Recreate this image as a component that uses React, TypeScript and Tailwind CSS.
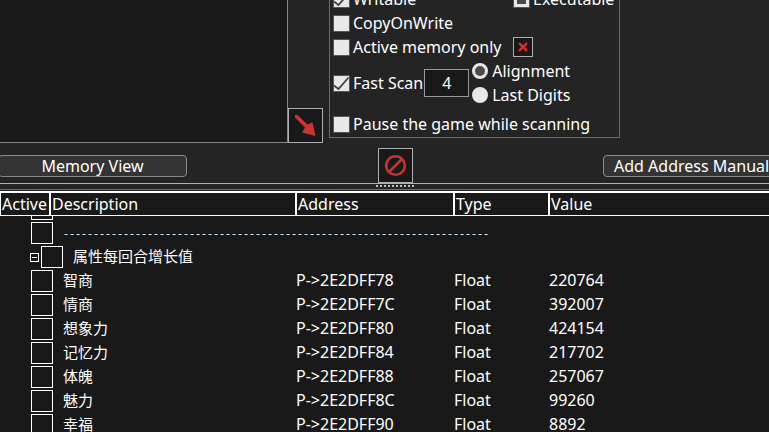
import React from 'react';

const ENTRIES = [
  { name: '智商', address: 'P->2E2DFF78', type: 'Float', value: '220764' },
  { name: '情商', address: 'P->2E2DFF7C', type: 'Float', value: '392007' },
  { name: '想象力', address: 'P->2E2DFF80', type: 'Float', value: '424154' },
  { name: '记忆力', address: 'P->2E2DFF84', type: 'Float', value: '217702' },
  { name: '体魄', address: 'P->2E2DFF88', type: 'Float', value: '257067' },
  { name: '魅力', address: 'P->2E2DFF8C', type: 'Float', value: '99260' },
  { name: '幸福', address: 'P->2E2DFF90', type: 'Float', value: '8892' },
];

interface OptionProps {
  label: string;
  checked?: boolean;
  mixed?: boolean;
}

const Option: React.FC<OptionProps> = ({ label, checked, mixed }) => (
  <label className="flex h-6 items-center gap-[3px] whitespace-nowrap">
    <span className="relative block h-[17px] w-[17px]">
      <input
        type="checkbox"
        defaultChecked={checked}
        className="peer block h-[17px] w-[17px] appearance-none border border-[#555555] bg-[#e8e8e8]"
      />
      {mixed ? (
        <span className="absolute inset-[4px] bg-[#4a4a4a]" />
      ) : (
        <svg viewBox="0 0 17 17" className="pointer-events-none absolute inset-0 hidden peer-checked:block">
          <path d="M1 10.5 L5.5 14 L15.5 2.5" fill="none" stroke="#404040" strokeWidth="1.8" />
        </svg>
      )}
    </span>
    {label}
  </label>
);

const Radio: React.FC<OptionProps> = ({ label, checked }) => (
  <label className="flex h-6 items-center gap-1 whitespace-nowrap">
    <input
      type="radio"
      name="fast-scan-mode"
      defaultChecked={checked}
      className="h-4 w-4 appearance-none rounded-full border-[3px] border-[#e8e8e8] bg-[#e8e8e8] checked:bg-[#4a4a4a]"
    />
    {label}
  </label>
);

const ActiveBox: React.FC<{ label: string }> = ({ label }) => (
  <input
    type="checkbox"
    aria-label={label}
    className="h-[22px] w-[22px] shrink-0 appearance-none border border-white checked:bg-white"
  />
);

const ScanOptions = () => (
  <fieldset className="mb-[5px] ml-[6px] w-[291px] shrink-0 border border-[#6a6a6a] pl-[3px] pb-px">
    <div className="grid grid-cols-[180px_1fr]">
      <Option label="Writable" checked />
      <Option label="Executable" mixed />
      <Option label="CopyOnWrite" />
      <span />
      <Option label="Active memory only" />
      <button aria-label="Clear" className="h-5 w-5 self-center border border-[#b0b0b0] bg-[#191919]">
        <svg viewBox="0 0 18 18" className="h-[18px] w-[18px]">
          <path d="M5 5 L13 13 M13 5 L5 13" stroke="#f0282e" strokeWidth="2.4" />
        </svg>
      </button>
    </div>
    <div className="flex items-center">
      <Option label="Fast Scan" checked />
      <input
        type="text"
        aria-label="Fast scan alignment"
        defaultValue="4"
        className="ml-px h-7 w-[45px] border border-[#999999] bg-[#191919] text-center"
      />
      <div className="ml-[3px]">
        <Radio label="Alignment" checked />
        <Radio label="Last Digits" />
      </div>
    </div>
    <div className="mt-[5px]">
      <Option label="Pause the game while scanning" />
    </div>
  </fieldset>
);

const AddressTable = () => (
  <table className="w-full table-fixed border-separate border-spacing-0 bg-[#191919] text-left whitespace-nowrap">
    <colgroup>
      <col className="w-[49px]" />
      <col className="w-[246px]" />
      <col className="w-[158px]" />
      <col className="w-[95px]" />
      <col />
    </colgroup>
    <thead>
      <tr className="h-[25px] leading-[22px]">
        <th className="border-t-2 border-b border-l border-white p-0 pl-px font-normal">Active</th>
        <th className="border-t-2 border-b border-l-2 border-white p-0 pl-px font-normal">Description</th>
        <th className="border-t-2 border-b border-l-2 border-white p-0 pl-px font-normal">Address</th>
        <th className="border-t-2 border-b border-l-2 border-white p-0 pl-px font-normal">Type</th>
        <th className="border-t-2 border-b border-l-2 border-white p-0 pl-px font-normal">Value</th>
      </tr>
    </thead>
    <tbody>
      {/* row scrolled half out of view */}
      <tr>
        <td colSpan={5} className="p-0">
          <div className="flex h-[5px] items-end overflow-hidden pb-px pl-[31px]">
            <ActiveBox label="Active" />
          </div>
        </td>
      </tr>
      <tr>
        <td colSpan={5} className="p-0">
          <div className="flex h-6 items-center gap-[10px] pl-[31px]">
            <ActiveBox label="Separator" />
            <span className="pt-[3px] font-['Liberation_Mono',monospace] text-[10px]">{'-'.repeat(71)}</span>
          </div>
        </td>
      </tr>
      <tr>
        <td colSpan={5} className="p-0">
          <div className="flex h-6 items-center pl-[30px]">
            <button aria-label="Collapse" className="mr-[2px] flex h-[9px] w-[9px] items-center justify-center border border-white">
              <span className="h-px w-[5px] bg-white" />
            </button>
            <ActiveBox label="属性每回合增长值" />
            <span className="ml-[10px] pb-[2px] text-[15px] leading-[22px]">属性每回合增长值</span>
          </div>
        </td>
      </tr>
      {ENTRIES.map((entry) => (
        <tr key={entry.address} className="leading-[22px]">
          <td colSpan={2} className="p-0">
            <div className="flex h-6 items-center gap-[10px] pl-[31px]">
              <ActiveBox label={entry.name} />
              <span className="pb-[2px] text-[15px]">{entry.name}</span>
            </div>
          </td>
          <td className="p-0 pb-[2px] pl-px">{entry.address}</td>
          <td className="p-0 pb-[2px] pl-px">{entry.type}</td>
          <td className="p-0 pb-[2px] pl-px">{entry.value}</td>
        </tr>
      ))}
    </tbody>
  </table>
);

export default function App() {
  return (
    <main className="flex h-screen flex-col overflow-hidden bg-[#242424] font-['Noto_Sans','Noto_Sans_CJK_SC',sans-serif] text-base leading-6 text-white">
      <section className="flex h-[143px] shrink-0 items-end overflow-hidden">
        <div className="w-[288px] shrink-0 self-stretch border-r border-b border-[#85858f] bg-[#191919]" />
        <button aria-label="Add to address list" className="h-[35px] w-[35px] shrink-0 border border-[#b0b0b0] bg-[#191919]">
          <svg viewBox="1 1 33 33" className="h-[33px] w-[33px]">
            <path d="M7 7 H9.5 L19.5 16.5 L24.5 14.5 L27.5 28 L14 24.5 L17 19.5 L7 9.5 Z" fill="#c93434" />
          </svg>
        </button>
        <ScanOptions />
      </section>

      <section className="flex h-10 shrink-0 items-end">
        <button className="mb-[6px] -ml-[2px] h-[22px] w-[189px] shrink-0 rounded-[4px] border border-[#8a8a8a] bg-[#333333] leading-5">
          Memory View
        </button>
        <button aria-label="Stop" className="ml-[191px] h-[35px] w-[35px] shrink-0 border border-[#b0b0b0] bg-[#191919]">
          <svg viewBox="1 1 33 33" className="h-[33px] w-[33px]">
            <g fill="none" stroke="#c43434" strokeWidth="2.6">
              <circle cx="17.5" cy="17.5" r="9.3" />
              <path d="M11 24 L24 11" />
            </g>
          </svg>
        </button>
        <button className="mb-[6px] ml-[190px] h-[22px] shrink-0 rounded-[4px] border border-[#8a8a8a] bg-[#333333] px-[10px] leading-5">
          Add Address Manually
        </button>
      </section>

      <div className="mb-px flex h-[7px] shrink-0 border-t border-b border-t-[#b0b0b0] border-b-[#6a6a6a] pt-px pl-[376px]">
        <div className="flex gap-[2px]">
          {Array.from({ length: 10 }, (_, i) => (
            <span key={i} className="h-[2px] w-[2px] bg-[#c0c0c0]" />
          ))}
        </div>
      </div>

      <AddressTable />
    </main>
  );
}
